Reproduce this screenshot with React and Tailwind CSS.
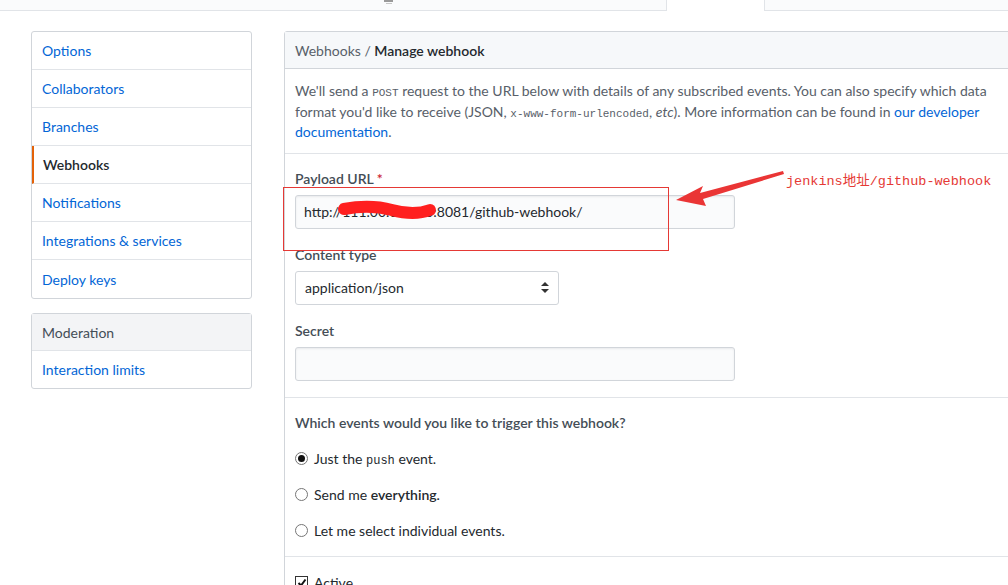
import React from 'react';

const font = { fontFamily: 'Lato, "Noto Sans", sans-serif' };
const mono = { fontFamily: '"Liberation Mono", monospace' };

const SideItem = ({ label, active, last }) => (
  <div
    className={`h-[38px] flex items-center text-[14px] ${last ? '' : 'border-b border-[#e1e4e8]'} ${
      active ? 'border-l-2 border-l-[#e36209] pl-[9px] font-semibold text-[#24292e]' : 'pl-[10px] text-[#0366d6]'
    }`}
  >
    {label}
  </div>
);

const Radio = ({ checked, children }) => (
  <div className="h-[36px] flex items-center gap-[6px] text-[14px] text-[#24292e]">
    <span className="w-[13px] h-[13px] rounded-full border border-[#767676] bg-white flex items-center justify-center">
      {checked && <span className="w-[7px] h-[7px] rounded-full bg-[#111]" />}
    </span>
    <span>{children}</span>
  </div>
);

export default function App() {
  const menu = ['Options', 'Collaborators', 'Branches', 'Webhooks', 'Notifications', 'Integrations & services', 'Deploy keys'];

  return (
    <div className="relative w-[1008px] h-[585px] overflow-hidden bg-white" style={font}>
      {/* tab strip */}
      <div className="flex h-[11px]">
        <div className="w-[667px] bg-[#fafbfc] border-b border-r border-[#e1e4e8] relative">
          <div className="absolute left-[384px] top-0 w-[9px] h-[2px] bg-[#9a9a9a]" />
          <div className="absolute left-[386px] top-[3px] w-[6px] h-[1px] bg-[#c8c8c8]" />
        </div>
        <div className="w-[97px] bg-white" />
        <div className="flex-1 bg-[#fafbfc] border-b border-l border-[#e1e4e8]" />
      </div>

      <div className="flex pt-[20px] pl-[31px]">
        {/* sidebar */}
        <div className="w-[221px] shrink-0">
          <div className="border border-[#d1d5da] rounded-[3px] bg-white">
            {menu.map((m, i) => (
              <SideItem key={m} label={m} active={m === 'Webhooks'} last={i === menu.length - 1} />
            ))}
          </div>
          <div className="mt-[14px] border border-[#d1d5da] rounded-[3px] bg-white">
            <div className="h-[37px] flex items-center pl-[10px] bg-[#f3f4f6] border-b border-[#e1e4e8] text-[14px] text-[#444d56]">
              Moderation
            </div>
            <div className="h-[37px] flex items-center pl-[10px] text-[14px] text-[#0366d6]">Interaction limits</div>
          </div>
        </div>

        {/* main panel */}
        <div className="ml-[32px] w-[760px] shrink-0 border border-[#d1d5da] rounded-[3px]">
          <div className="h-[37px] flex items-center px-[10px] bg-[#f6f8fa] border-b border-[#d1d5da] text-[14px] text-[#586069]">
            Webhooks /&nbsp;<span className="font-semibold text-[#24292e]">Manage webhook</span>
          </div>

          <div className="px-[10px] pt-[12px] pb-[10px] text-[14px] leading-[20.5px] text-[#586069] border-b border-[#e1e4e8]">
            We'll send a <code className="text-[11px] leading-none" style={mono}>POST</code> request to the URL below with
            details of any subscribed events. You can also specify which data
            <br />
            format you'd like to receive (JSON,{' '}
            <code className="text-[11px] leading-none" style={mono}>x-www-form-urlencoded</code>,{' '}
            <em>etc</em>). More information can be found in <span className="text-[#0366d6]">our developer</span>
            <br />
            <span className="text-[#0366d6]">documentation</span>.
          </div>

          <div className="px-[10px] pt-[15px] pb-[16px] border-b border-[#e1e4e8]">
            <div className="text-[14px] leading-[20px] font-semibold text-[#444d56]">
              Payload URL <span className="text-[#cb2431]">*</span>
            </div>
            <div className="mt-[6px] w-[440px] h-[34px] flex items-center px-[8px] bg-[#fafbfc] border border-[#d1d5da] rounded-[3px] shadow-[inset_0_1px_2px_rgba(27,31,35,0.075)] text-[14px] text-[#24292e]">
              http://111.00.00.000:8081/github-webhook/
            </div>

            <div className="mt-[16px] text-[14px] leading-[20px] font-semibold text-[#444d56]">Content type</div>
            <div className="mt-[6px] w-[264px] h-[34px] flex items-center justify-between px-[9px] bg-white border border-[#d1d5da] rounded-[3px] text-[14px] text-[#24292e]">
              <span>application/json</span>
              <svg width="8" height="11" viewBox="0 0 8 11">
                <path d="M4 0 L8 4 H0 Z M4 11 L8 7 H0 Z" fill="#333" />
              </svg>
            </div>

            <div className="mt-[16px] text-[14px] leading-[20px] font-semibold text-[#444d56]">Secret</div>
            <div className="mt-[6px] w-[440px] h-[34px] bg-[#fafbfc] border border-[#d1d5da] rounded-[3px] shadow-[inset_0_1px_2px_rgba(27,31,35,0.075)]" />
          </div>

          <div className="px-[10px] pt-[15px] pb-[7px] border-b border-[#e1e4e8]">
            <div className="text-[14px] leading-[20px] font-semibold text-[#444d56] mb-[8px]">
              Which events would you like to trigger this webhook?
            </div>
            <Radio checked>
              Just the <code className="text-[12px] leading-none" style={mono}>push</code> event.
            </Radio>
            <Radio>
              Send me <span className="font-semibold">everything.</span>
            </Radio>
            <Radio>Let me select individual events.</Radio>
          </div>

          <div className="px-[10px] pt-[16px]">
            <div className="flex items-center gap-[6px] text-[14px] leading-[20px] text-[#24292e]">
              <span className="w-[13px] h-[13px] border border-[#333] flex items-center justify-center">
                <svg width="10" height="10" viewBox="0 0 10 10">
                  <path d="M1.5 5 L4 7.5 L8.5 1.5" stroke="#111" strokeWidth="2" fill="none" />
                </svg>
              </span>
              Active
            </div>
          </div>
        </div>
      </div>

      {/* annotation overlays */}
      <div className="absolute left-[283px] top-[187px] w-[386px] h-[64px] border border-[#e53935]" />
      <svg className="absolute left-0 top-0" width="1008" height="585">
        <path d="M344 209 Q370 204 392 210 T430 210" stroke="#ff1f1f" strokeWidth="12" fill="none" strokeLinecap="round" />
        <polygon points="783,171 700,193 703,186 676,200 706,206 703,199 784,174" fill="#ea3535" />
      </svg>
      <div
        className="absolute left-[786px] top-[172px] text-[13.5px] text-[#e53935]"
        style={{ fontFamily: '"Liberation Mono", "Noto Sans CJK SC", monospace' }}
      >
        jenkins地址/github-webhook
      </div>
    </div>
  );
}
